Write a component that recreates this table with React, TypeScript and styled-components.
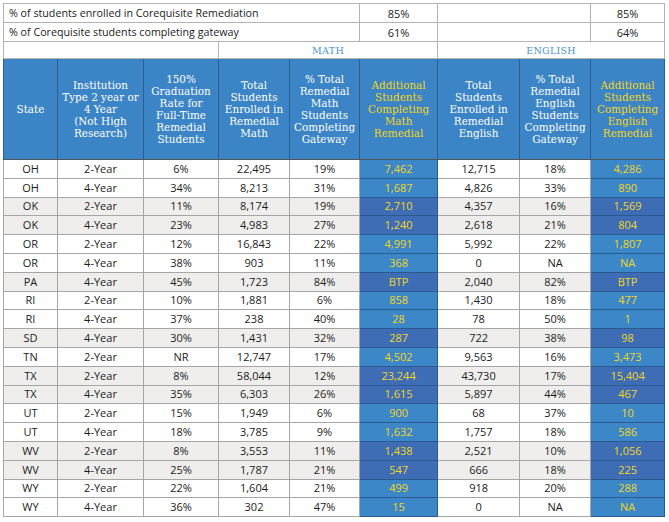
import styled, { createGlobalStyle, css } from "styled-components";

const GlobalStyle = createGlobalStyle`
  html, body {
    margin: 0;
    padding: 0;
    background: #ffffff;
  }
`;

type Row = {
  state: string;
  type: string;
  grad: string;
  mathTotal: string;
  mathPct: string;
  mathAdd: string;
  engTotal: string;
  engPct: string;
  engAdd: string;
};

const rows: Row[] = [
  ["OH", "2-Year", "6%", "22,495", "19%", "7,462", "12,715", "18%", "4,286"],
  ["OH", "4-Year", "34%", "8,213", "31%", "1,687", "4,826", "33%", "890"],
  ["OK", "2-Year", "11%", "8,174", "19%", "2,710", "4,357", "16%", "1,569"],
  ["OK", "4-Year", "23%", "4,983", "27%", "1,240", "2,618", "21%", "804"],
  ["OR", "2-Year", "12%", "16,843", "22%", "4,991", "5,992", "22%", "1,807"],
  ["OR", "4-Year", "38%", "903", "11%", "368", "0", "NA", "NA"],
  ["PA", "4-Year", "45%", "1,723", "84%", "BTP", "2,040", "82%", "BTP"],
  ["RI", "2-Year", "10%", "1,881", "6%", "858", "1,430", "18%", "477"],
  ["RI", "4-Year", "37%", "238", "40%", "28", "78", "50%", "1"],
  ["SD", "4-Year", "30%", "1,431", "32%", "287", "722", "38%", "98"],
  ["TN", "2-Year", "NR", "12,747", "17%", "4,502", "9,563", "16%", "3,473"],
  ["TX", "2-Year", "8%", "58,044", "12%", "23,244", "43,730", "17%", "15,404"],
  ["TX", "4-Year", "35%", "6,303", "26%", "1,615", "5,897", "44%", "467"],
  ["UT", "2-Year", "15%", "1,949", "6%", "900", "68", "37%", "10"],
  ["UT", "4-Year", "18%", "3,785", "9%", "1,632", "1,757", "18%", "586"],
  ["WV", "2-Year", "8%", "3,553", "11%", "1,438", "2,521", "10%", "1,056"],
  ["WV", "4-Year", "25%", "1,787", "21%", "547", "666", "18%", "225"],
  ["WY", "2-Year", "22%", "1,604", "21%", "499", "918", "20%", "288"],
  ["WY", "4-Year", "36%", "302", "47%", "15", "0", "NA", "NA"],
].map(([state, type, grad, mathTotal, mathPct, mathAdd, engTotal, engPct, engAdd]) => ({
  state,
  type,
  grad,
  mathTotal,
  mathPct,
  mathAdd,
  engTotal,
  engPct,
  engAdd,
}));

// states whose rows are drawn on the grey band
const shadedStates = ["OK", "PA", "SD", "TX", "WV"];

const colWidths = [54, 86, 75, 71, 70, 78, 82, 71, 74];

const headers: { lines: string[]; gold?: boolean }[] = [
  { lines: ["State"] },
  { lines: ["Institution", "Type 2 year or", "4 Year", "(Not High", "Research)"] },
  { lines: ["150%", "Graduation", "Rate for", "Full-Time", "Remedial", "Students"] },
  { lines: ["Total", "Students", "Enrolled in", "Remedial", "Math"] },
  { lines: ["% Total", "Remedial", "Math", "Students", "Completing", "Gateway"] },
  { lines: ["Additional", "Students", "Completing", "Math", "Remedial"], gold: true },
  { lines: ["Total", "Students", "Enrolled in", "Remedial", "English"] },
  { lines: ["% Total", "Remedial", "English", "Students", "Completing", "Gateway"] },
  { lines: ["Additional", "Students", "Completing", "English", "Remedial"], gold: true },
];

const App = () => {
  return (
    <>
      <GlobalStyle />
      <Page>
        <Table>
          <colgroup>
            {colWidths.map((w, i) => (
              <col key={i} style={{ width: w }} />
            ))}
          </colgroup>
          <thead>
            <SummaryRow>
              <LabelCell colSpan={5}>% of students enrolled in Corequisite Remediation</LabelCell>
              <SummaryCell>85%</SummaryCell>
              <SummaryCell colSpan={2} />
              <SummaryCell>85%</SummaryCell>
            </SummaryRow>
            <SummaryRow>
              <LabelCell colSpan={5}>% of Corequisite students completing gateway</LabelCell>
              <SummaryCell>61%</SummaryCell>
              <SummaryCell colSpan={2} />
              <SummaryCell>64%</SummaryCell>
            </SummaryRow>
            <SubjectRow>
              <SubjectCell colSpan={3} />
              <SubjectCell colSpan={3}>MATH</SubjectCell>
              <SubjectCell colSpan={3}>ENGLISH</SubjectCell>
            </SubjectRow>
            <HeadRow>
              {headers.map((h, i) => (
                <HeadCell key={i} $gold={h.gold}>
                  {h.lines.map((line, j) => (
                    <span key={j}>
                      {line}
                      {j < h.lines.length - 1 && <br />}
                    </span>
                  ))}
                </HeadCell>
              ))}
            </HeadRow>
          </thead>
          <tbody>
            {rows.map((r, i) => {
              const shaded = shadedStates.includes(r.state);
              return (
                <BodyRow key={i} $shaded={shaded}>
                  <Cell>{r.state}</Cell>
                  <Cell>{r.type}</Cell>
                  <Cell>{r.grad}</Cell>
                  <Cell>{r.mathTotal}</Cell>
                  <Cell>{r.mathPct}</Cell>
                  <HighlightCell $shaded={shaded}>{r.mathAdd}</HighlightCell>
                  <Cell>{r.engTotal}</Cell>
                  <Cell>{r.engPct}</Cell>
                  <HighlightCell $shaded={shaded}>{r.engAdd}</HighlightCell>
                </BodyRow>
              );
            })}
          </tbody>
        </Table>
      </Page>
    </>
  );
};

export default App;

const Page = styled.div`
  padding: 3px 0 0 3px;
`;

const Table = styled.table`
  width: 661px;
  table-layout: fixed;
  border-collapse: collapse;
  font-family: "Open Sans", "Liberation Sans", sans-serif;
  font-size: 11px;
  color: #1c1c1c;
  border: 1px solid #b4b4b4;
`;

const SummaryRow = styled.tr`
  height: 19px;
`;

const baseCell = css`
  padding: 0;
  border: 1px solid #b4b4b4;
  white-space: nowrap;
  overflow: hidden;
`;

const LabelCell = styled.td`
  ${baseCell};
  text-align: left;
  padding-left: 5px;
  font-size: 10.7px;
`;

const SummaryCell = styled.td`
  ${baseCell};
  text-align: center;
  font-size: 11px;
`;

const SubjectRow = styled.tr`
  height: 17px;
`;

const SubjectCell = styled.td`
  ${baseCell};
  text-align: center;
  font-family: "DejaVu Serif", "Liberation Serif", serif;
  font-size: 9.5px;
  letter-spacing: 0.3px;
  color: #4a90cf;
`;

const HeadRow = styled.tr`
  height: 101px;
  background: #3b84c5;
`;

const HeadCell = styled.th<{ $gold?: boolean }>`
  padding: 0;
  border: 1px solid #2b5f93;
  border-bottom-color: #555;
  text-align: center;
  vertical-align: middle;
  font-family: "DejaVu Serif", "Liberation Serif", serif;
  font-weight: normal;
  font-size: 10.4px;
  line-height: 12px;
  color: ${({ $gold }) => ($gold ? "#f4d41a" : "#ffffff")};
`;

const BodyRow = styled.tr<{ $shaded: boolean }>`
  height: 18.8px;
  background: ${({ $shaded }) => ($shaded ? "#efeeec" : "#ffffff")};
`;

const Cell = styled.td`
  ${baseCell};
  border-color: #a6a6a6;
  text-align: center;
  line-height: 14px;
`;

const HighlightCell = styled(Cell)<{ $shaded: boolean }>`
  background: ${({ $shaded }) => ($shaded ? "#3e6db6" : "#3b87c8")};
  border-color: #2b5a91;
  color: #f3d51c;
`;
